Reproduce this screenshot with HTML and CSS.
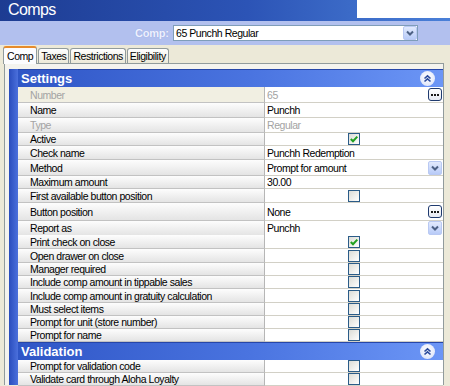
FILE: index.html
```html
<!DOCTYPE html>
<html>
<head>
  <meta charset="utf-8">
  <title>Comps</title>
  <link rel="stylesheet" href="styles.css">
</head>
<body>
  <div class="titlebar">
    <span class="title">Comps</span>
    <div class="search-box"></div>
  </div>

  <div class="comp-bar">
    <span class="comp-label">Comp:</span>
    <div class="combo">
      <span>65 Punchh Regular</span>
      <span class="drop-btn"><svg width="14" height="14" viewBox="0 0 14 14"><path d="M4 5.5 L7 8.5 L10 5.5" fill="none" stroke="#4d6185" stroke-width="2"/></svg></span>
    </div>
  </div>

  <div class="tabs">
    <div class="tab active">Comp</div>
    <div class="tab">Taxes</div>
    <div class="tab">Restrictions</div>
    <div class="tab">Eligibility</div>
  </div>

  <div class="panel">
    <div class="grid">
      <div class="stripe"></div>
      <div class="rows">
        <div class="section">
          <span>Settings</span>
          <span class="collapse"><svg width="15" height="15" viewBox="0 0 15 15"><path d="M4.5 7.5 L7.5 4.8 L10.5 7.5 M4.5 10.5 L7.5 7.8 L10.5 10.5" fill="none" stroke="#2a4a9c" stroke-width="1.6"/></svg></span>
        </div>

        <div class="row h16 disabled">
          <div class="label">Number</div>
          <div class="value">65<span class="dots-btn"><i></i><i></i><i></i></span></div>
        </div>
        <div class="row h15">
          <div class="label">Name</div>
          <div class="value">Punchh</div>
        </div>
        <div class="row h15 muted">
          <div class="label">Type</div>
          <div class="value">Regular</div>
        </div>
        <div class="row h13">
          <div class="label">Active</div>
          <div class="value center"><span class="check on"><svg width="10" height="10" viewBox="0 0 10 10"><path d="M1.8 5 L4 7.2 L8.3 2.6" fill="none" stroke="#21a121" stroke-width="2"/></svg></span></div>
        </div>
        <div class="row">
          <div class="label">Check name</div>
          <div class="value">Punchh Redemption</div>
        </div>
        <div class="row h16">
          <div class="label">Method</div>
          <div class="value">Prompt for amount<span class="drop-btn"><svg width="14" height="14" viewBox="0 0 14 14"><path d="M4 5.5 L7 8.5 L10 5.5" fill="none" stroke="#4d6185" stroke-width="2"/></svg></span></div>
        </div>
        <div class="row h13">
          <div class="label">Maximum amount</div>
          <div class="value">30.00</div>
        </div>
        <div class="row">
          <div class="label">First available button position</div>
          <div class="value center"><span class="check"></span></div>
        </div>
        <div class="row h18">
          <div class="label">Button position</div>
          <div class="value">None<span class="dots-btn"><i></i><i></i><i></i></span></div>
        </div>
        <div class="row">
          <div class="label">Report as</div>
          <div class="value">Punchh<span class="drop-btn"><svg width="14" height="14" viewBox="0 0 14 14"><path d="M4 5.5 L7 8.5 L10 5.5" fill="none" stroke="#4d6185" stroke-width="2"/></svg></span></div>
        </div>
        <div class="row">
          <div class="label">Print check on close</div>
          <div class="value center"><span class="check on"><svg width="10" height="10" viewBox="0 0 10 10"><path d="M1.8 5 L4 7.2 L8.3 2.6" fill="none" stroke="#21a121" stroke-width="2"/></svg></span></div>
        </div>
        <div class="row">
          <div class="label">Open drawer on close</div>
          <div class="value center"><span class="check"></span></div>
        </div>
        <div class="row h13">
          <div class="label">Manager required</div>
          <div class="value center"><span class="check"></span></div>
        </div>
        <div class="row h13">
          <div class="label">Include comp amount in tippable sales</div>
          <div class="value center"><span class="check"></span></div>
        </div>
        <div class="row">
          <div class="label">Include comp amount in gratuity calculation</div>
          <div class="value center"><span class="check"></span></div>
        </div>
        <div class="row h13">
          <div class="label">Must select items</div>
          <div class="value center"><span class="check"></span></div>
        </div>
        <div class="row h13">
          <div class="label">Prompt for unit (store number)</div>
          <div class="value center"><span class="check"></span></div>
        </div>
        <div class="row h13">
          <div class="label">Prompt for name</div>
          <div class="value center"><span class="check"></span></div>
        </div>

        <div class="section">
          <span>Validation</span>
          <span class="collapse"><svg width="15" height="15" viewBox="0 0 15 15"><path d="M4.5 7.5 L7.5 4.8 L10.5 7.5 M4.5 10.5 L7.5 7.8 L10.5 10.5" fill="none" stroke="#2a4a9c" stroke-width="1.6"/></svg></span>
        </div>

        <div class="row h13">
          <div class="label">Prompt for validation code</div>
          <div class="value center"><span class="check"></span></div>
        </div>
        <div class="row h13">
          <div class="label">Validate card through Aloha Loyalty</div>
          <div class="value center"><span class="check"></span></div>
        </div>
      </div>
    </div>
  </div>
</body>
</html>
```

FILE: styles.css
```css
/* Comps editor window */
html, body {
  margin: 0;
  padding: 0;
  width: 450px;
  height: 386px;
  overflow: hidden;
  background: #ece9d8;
  font-family: 'Liberation Sans', Arial, sans-serif;
  font-size: 10.5px;
  letter-spacing: -0.45px;
  color: #000;
}

.titlebar {
  height: 21px;
  display: flex;
  justify-content: space-between;
  align-items: flex-start;
  background: linear-gradient(to right, #1d3c92, #2c54b6 55%, #4a80d8);
}

.title {
  font-size: 16px;
  letter-spacing: -0.6px;
  line-height: 20px;
  color: #ffffff;
  padding-left: 8px;
}

.search-box {
  width: 93px;
  height: 18px;
  background: #ffffff;
}

.comp-bar {
  height: 24px;
  display: flex;
  align-items: center;
  padding-left: 135px;
  gap: 5px;
  background: #b2c0ee;
  box-sizing: border-box;
}

.comp-label {
  width: 33px;
  text-align: right;
  font-weight: bold;
  font-size: 11px;
  letter-spacing: -0.2px;
  color: #eef1ff;
  text-shadow: 0 0 1px #8f9fd8;
}

.combo {
  width: 245px;
  height: 16px;
  box-sizing: border-box;
  border: 1px solid #7f9db9;
  background: #ffffff;
  display: flex;
  align-items: center;
  justify-content: space-between;
  padding-left: 2px;
}

.combo .drop-btn {
  margin-right: 0;
}

.drop-btn {
  width: 14px;
  height: 14px;
  box-sizing: border-box;
  border: 1px solid #b9c9f3;
  border-radius: 2px;
  background: linear-gradient(#e2eafd, #b8cbf8);
  display: flex;
  align-items: center;
  justify-content: center;
  margin-right: 1px;
}

.drop-btn svg {
  display: block;
  flex: none;
}

.tabs {
  height: 18px;
  display: flex;
  align-items: flex-end;
  padding-left: 3px;
  gap: 1px;
}

.tab {
  height: 14px;
  line-height: 14px;
  padding: 0 2px;
  border: 1px solid #919b9c;
  border-bottom: none;
  border-radius: 3px 3px 0 0;
  background: linear-gradient(#ffffff, #ece9d8);
}

.tab.active {
  height: 16px;
  line-height: 17px;
  padding: 0 3px;
  background: #fcfcfe;
  border-top: 2px solid #e68b2c;
  margin-bottom: -1px;
  position: relative;
  z-index: 1;
}

.panel {
  margin: 0 6px 0 4px;
  border: 1px solid #919b9c;
  border-bottom: none;
  background: #f4f3ee;
  padding: 5px 0 0 4px;
  height: 322px;
  box-sizing: border-box;
}

.grid {
  display: flex;
  height: 100%;
}

.stripe {
  width: 9px;
  flex: none;
  background: linear-gradient(to right, #2a4dbd, #4b70dc);
}

.rows {
  flex: 1;
  display: flex;
  flex-direction: column;
}

.section {
  height: 18px;
  flex: none;
  display: flex;
  align-items: center;
  justify-content: space-between;
  padding: 0 8px 0 3px;
  background: linear-gradient(to right, #2f56c6, #4a74e0 55%, #6c96f6);
  border-top: 1px solid #2646a8;
  box-sizing: border-box;
  color: #ffffff;
  font-weight: bold;
  font-size: 13px;
  letter-spacing: 0;
}

.collapse {
  width: 15px;
  height: 15px;
  border-radius: 50%;
  background: radial-gradient(circle at 50% 40%, #ffffff, #d5def8);
  display: flex;
}

.row {
  height: 14px;
  flex: none;
  display: grid;
  grid-template-columns: 247px 1fr;
}

.row.h13 { height: 13px; }
.row.h15 { height: 15px; }
.row.h16 { height: 16px; }
.row.h18 { height: 18px; }

.label {
  display: flex;
  align-items: center;
  padding-left: 12px;
  background: linear-gradient(#fdfdfd, #e4e4e4);
  border-right: 1px solid #b6b6b6;
  border-bottom: 1px solid #c2c2c2;
  white-space: nowrap;
}

.value {
  display: flex;
  align-items: center;
  justify-content: space-between;
  padding-left: 2px;
  background: #ffffff;
  border-bottom: 1px solid #d2d0c6;
  white-space: nowrap;
}

.value.center {
  justify-content: center;
  padding-left: 0;
}

.row.disabled .label {
  background: #f1efe2;
  color: #a3a3a3;
}

.row.disabled .value,
.row.muted .label,
.row.muted .value {
  color: #a3a3a3;
}

.dots-btn {
  width: 14px;
  height: 13px;
  box-sizing: border-box;
  border: 1px solid #1f3a6e;
  border-radius: 3px;
  background: linear-gradient(#ffffff, #e6e9f2);
  display: flex;
  align-items: center;
  justify-content: center;
  gap: 1px;
  margin-right: 1px;
}

.dots-btn i {
  width: 2px;
  height: 2px;
  background: #1a1a1a;
}

.check {
  width: 12px;
  height: 12px;
  box-sizing: border-box;
  border: 1px solid #2b5c88;
  background: linear-gradient(135deg, #dcdcd6, #ffffff);
  display: flex;
  align-items: center;
  justify-content: center;
}
```
